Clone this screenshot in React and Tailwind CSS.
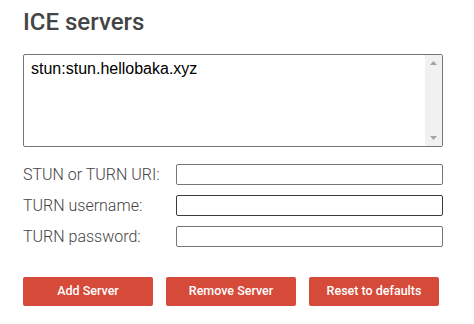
const FIELDS = [
  { label: 'STUN or TURN URI:', border: 'border-[#767676]' },
  { label: 'TURN username:', border: 'border-[#3b3b3b]' },
  { label: 'TURN password:', border: 'border-[#767676]' },
]

const BUTTONS = ['Add Server', 'Remove Server', 'Reset to defaults']

export default function App() {
  return (
    <div className="w-[474px] h-[324px] bg-white pl-[23px] pt-[8px] font-['Roboto',sans-serif] text-[#444]">
      <h2 className="text-[24px] leading-[28px] font-medium">ICE servers</h2>

      {/* server list (textarea look-alike with classic scrollbar) */}
      <div className="mt-[18px] w-[420px] h-[93px] border border-[#767676] rounded-[2px] flex">
        <div className="flex-1 pl-[7px] pt-[5px] font-['Liberation_Sans',Arial,sans-serif] text-[16px] leading-[18px] text-black">
          stun:stun.hellobaka.xyz
        </div>
        <div className="w-[17px] bg-[#f1f1f1] flex flex-col items-center justify-between py-[6px]">
          <svg width="7" height="4" viewBox="0 0 7 4"><path d="M3.5 0L7 4H0z" fill="#a3a3a3" /></svg>
          <svg width="7" height="4" viewBox="0 0 7 4"><path d="M0 0H7L3.5 4z" fill="#a3a3a3" /></svg>
        </div>
      </div>

      <div className="mt-[17px] flex flex-col gap-[10px]">
        {FIELDS.map(f => (
          <div key={f.label} className="flex items-center">
            <span className="w-[153px] text-[16px] leading-[20px] font-light">{f.label}</span>
            <div className={`w-[267px] h-[21px] border ${f.border} rounded-[2px]`} />
          </div>
        ))}
      </div>

      <div className="mt-[30px] flex gap-[13px]">
        {BUTTONS.map(b => (
          <button
            key={b}
            className="w-[130px] h-[29px] rounded-[2px] bg-[#d54a39] text-white text-[12.5px] font-medium"
          >
            {b}
          </button>
        ))}
      </div>
    </div>
  )
}
